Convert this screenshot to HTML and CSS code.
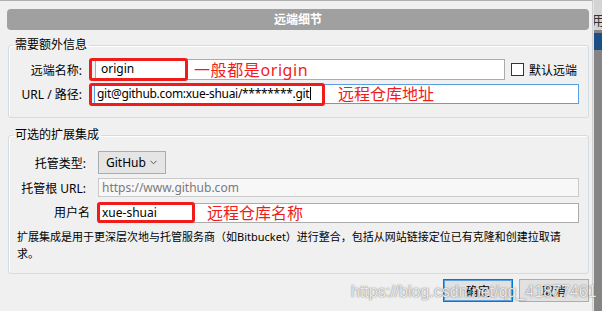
FILE: index.html
```html
<!DOCTYPE html>
<html lang="zh-CN">
<head>
  <meta charset="UTF-8" />
  <meta name="viewport" content="width=device-width, initial-scale=1.0" />
  <title>远端细节</title>
  <link rel="stylesheet" href="styles.css">
</head>
<body>
  <div class="screen">
    <div class="dialog">
      <div class="titlebar">远端细节</div>

      <fieldset class="group group-required">
        <legend>需要额外信息</legend>
        <div class="form-grid">
          <div class="field-label">远端名称:</div>
          <div class="field-row">
            <div class="text-box name-box">
              origin
              <span class="mark mark-name"></span>
              <span class="note note-name">一般都是origin</span>
            </div>
            <label class="check"><span class="check-box"></span>默认远端</label>
          </div>

          <div class="field-label">URL / 路径:</div>
          <div class="text-box url-box focused">
            git@github.com:xue-shuai/********.git<span class="caret"></span>
            <span class="mark mark-url"></span>
            <span class="note note-url">远程仓库地址</span>
          </div>
        </div>
      </fieldset>

      <fieldset class="group group-optional">
        <legend>可选的扩展集成</legend>
        <div class="form-grid wide">
          <div class="field-label">托管类型:</div>
          <div class="select-row">
            <div class="select">
              GitHub
              <svg class="chevron" width="7" height="5" viewBox="0 0 7 5"><path d="M0.5 0.8 L3.5 3.8 L6.5 0.8" fill="none" stroke="#555" stroke-width="1"/></svg>
            </div>
          </div>

          <div class="field-label">托管根 URL:</div>
          <div class="text-box disabled">https://www.github.com</div>

          <div class="field-label user-label">用户名</div>
          <div class="text-box user-box">
            xue-shuai
            <span class="mark mark-user"></span>
            <span class="note note-user">远程仓库名称</span>
          </div>

          <p class="hint">扩展集成是用于更深层次地与托管服务商（如Bitbucket）进行整合，包括从网站链接定位已有克隆和创建拉取请求。</p>
        </div>
      </fieldset>

      <div class="actions">
        <button class="btn btn-default">确定</button>
        <button class="btn">取消</button>
      </div>
    </div>

    <div class="backdrop">
      <div class="backdrop-top"><span>用</span></div>
      <div class="backdrop-tab"></div>
    </div>

    <div class="watermark">https://blog.csdn.net/qq_41877461</div>
  </div>
</body>
</html>
```

FILE: styles.css
```css
body {
  margin: 0;
  background-color: #f0f0f0;
  font-family: "Noto Sans", "Noto Sans CJK SC", sans-serif;
  font-size: 12px;
  color: #000;
}
.screen {
  position: relative;
  display: flex;
  width: 602px;
  height: 311px;
  overflow: hidden;
}
.dialog {
  flex: 0 0 593px;
  box-sizing: border-box;
  border-top: 1px solid #b0b0b0;
  border-right: 1px solid #d0d0d0;
  padding: 8px 3px 0 7px;
  background-color: #f0f0f0;
}
.titlebar {
  height: 21px;
  line-height: 21px;
  background-color: #a0a0a0;
  border-radius: 4px;
  color: #fff;
  text-align: center;
  font-size: 12px;
  font-weight: 700;
}
.group {
  margin: 7px 0 0 1px;
  padding: 0;
  border: 1px solid #d3dbe3;
  border-radius: 3px;
  box-shadow: inset 1px 1px 0 #fff;
}
.group legend {
  margin-left: 4px;
  padding: 0 2px;
  font-size: 12px;
  line-height: 16px;
}
.group-optional {
  margin-top: 9px;
}
.form-grid {
  display: grid;
  grid-template-columns: 73px 1fr;
  column-gap: 12px;
  row-gap: 4px;
  align-items: center;
  padding: 6px 9px 13px 0;
}
.form-grid.wide {
  grid-template-columns: 77px 1fr;
  padding: 8px 9px 11px 0;
}
.field-label {
  text-align: right;
  white-space: nowrap;
}
.user-label {
  margin-right: -4px;
}
.field-row {
  display: flex;
  align-items: center;
  gap: 6px;
}
.text-box {
  position: relative;
  box-sizing: border-box;
  height: 20px;
  line-height: 18px;
  padding: 0 3px;
  border: 1px solid #ababab;
  background-color: #fff;
  font-size: 12px;
  white-space: nowrap;
}
.name-box {
  width: 410px;
  height: 21px;
  margin-left: 1px;
  padding-left: 5px;
}
.url-box {
  padding-left: 2px;
  letter-spacing: -0.3px;
}
.text-box.focused {
  border-color: #5b9fe3;
}
.caret {
  display: inline-block;
  width: 1px;
  height: 13px;
  margin-left: 1px;
  vertical-align: -2px;
  background-color: #000;
}
.text-box.disabled {
  height: 19px;
  line-height: 17px;
  background-color: #f7f7f7;
  border-color: #cacaca;
  color: #7a7a7a;
}
.user-box {
  margin-top: 2px;
}
.mark {
  position: absolute;
  box-sizing: border-box;
  border: 3px solid #f01c1c;
  border-radius: 3px;
}
.mark-name {
  left: -7px;
  top: -2px;
  width: 99px;
  height: 23px;
}
.mark-url {
  left: -6px;
  top: -2px;
  width: 236px;
  height: 23px;
}
.mark-user {
  left: -2px;
  top: -2px;
  width: 98px;
  height: 21px;
}
.note {
  position: absolute;
  top: 50%;
  transform: translateY(-50%);
  color: #f01c1c;
  font-size: 16px;
  line-height: 20px;
  letter-spacing: 0;
}
.note-name {
  left: 98px;
  letter-spacing: 0.6px;
}
.note-url {
  left: 243px;
}
.note-user {
  left: 108px;
}
.check {
  display: flex;
  align-items: center;
  gap: 5px;
  white-space: nowrap;
}
.check-box {
  box-sizing: border-box;
  width: 13px;
  height: 13px;
  border: 1px solid #333;
  background-color: #fff;
}
.select-row {
  display: flex;
}
.select {
  position: relative;
  box-sizing: border-box;
  width: 68px;
  height: 23px;
  line-height: 21px;
  padding-left: 7px;
  border: 1px solid #acacac;
  background-color: #e5e5e5;
  font-size: 12px;
}
.chevron {
  position: absolute;
  right: 8px;
  top: 8px;
}
.hint {
  grid-column: 1 / 3;
  margin: 1px 0 0;
  padding-left: 8px;
  max-width: 554px;
  font-size: 11px;
  line-height: 17px;
}
.actions {
  display: flex;
  justify-content: flex-end;
  gap: 6px;
  margin-top: 5px;
}
.btn {
  box-sizing: border-box;
  width: 70px;
  height: 23px;
  padding: 0;
  border: 1px solid #adadad;
  background-color: #e1e1e1;
  font-family: "Noto Sans CJK SC", sans-serif;
  font-size: 12px;
  color: #000;
}
.btn-default {
  border-color: #0078d7;
  box-shadow: inset 0 0 0 1px #5aa2e4;
}
.backdrop {
  flex: 1;
  background-color: #858585;
  border-left: 1px solid #e4e4e4;
}
.backdrop-top {
  height: 30px;
  overflow: hidden;
  background-color: #d4d4d4;
}
.backdrop-top span {
  display: block;
  margin: 12px 0 0 -2px;
  color: #333;
  font-size: 13px;
  line-height: 16px;
}
.backdrop-tab {
  height: 17px;
  margin-top: 3px;
  background-color: #1e4e86;
}
.watermark {
  position: absolute;
  left: 351px;
  top: 282px;
  font-family: "Liberation Sans", Arial, sans-serif;
  font-size: 16px;
  line-height: 20px;
  color: rgba(255, 255, 255, 0.85);
  text-shadow: 0 0 1px rgba(90, 90, 90, 0.8), 0 0 2px rgba(120, 120, 120, 0.5);
  white-space: nowrap;
  pointer-events: none;
}
```
